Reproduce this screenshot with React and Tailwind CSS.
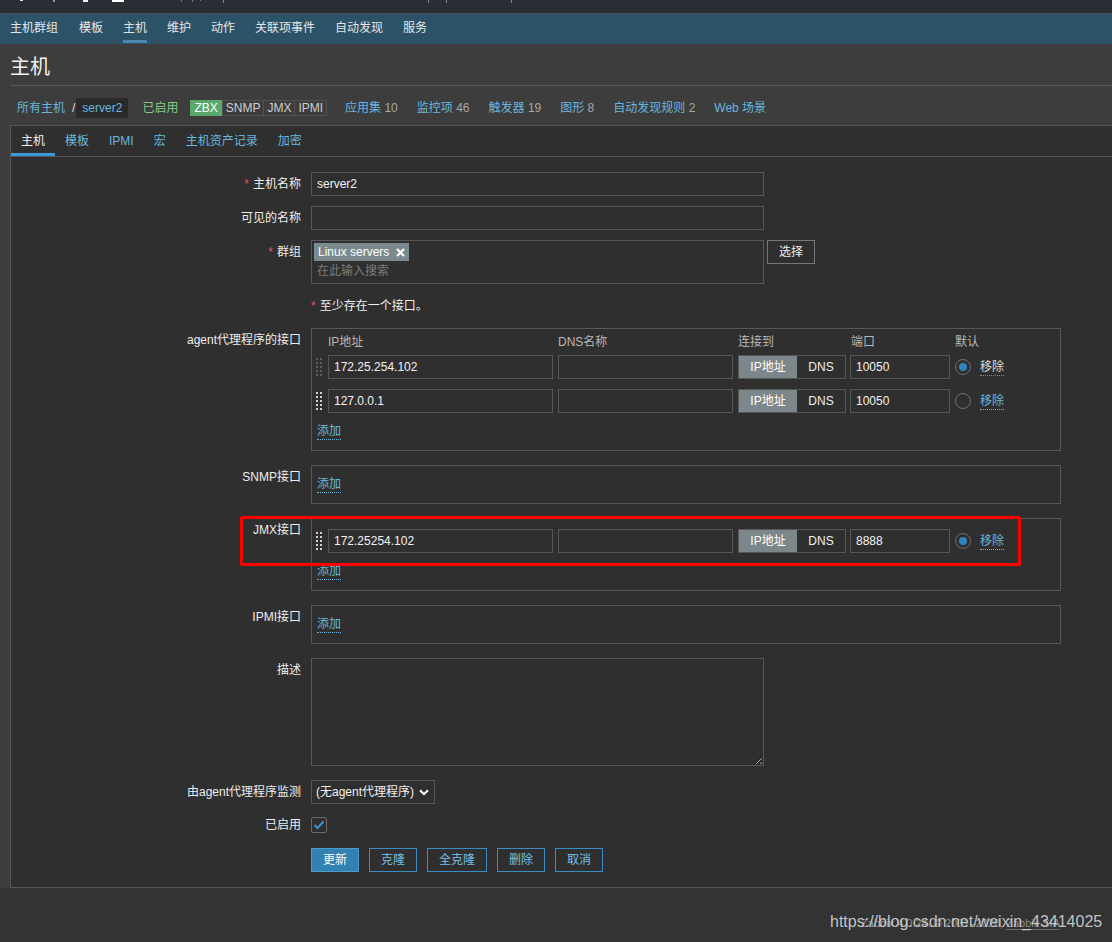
import React from "react";

const link = "text-[#68b7df]";
const field = "h-6 px-[5px] bg-transparent border border-[#575757] outline-none text-[#f2f2f2]";

const navItems = ["主机群组", "模板", "主机", "维护", "动作", "关联项事件", "自动发现", "服务"];
const tabs = ["主机", "模板", "IPMI", "宏", "主机资产记录", "加密"];
const counts = [
  ["应用集", "10"],
  ["监控项", "46"],
  ["触发器", "19"],
  ["图形", "8"],
  ["自动发现规则", "2"],
];

function Label({ children, required }) {
  return (
    <div className="text-right leading-6 text-[#eeeeee] whitespace-nowrap">
      {required && <span className="text-[#e45959] mr-[4px]">*</span>}
      {children}
    </div>
  );
}

function Row({ label, required, className = "", children }) {
  return (
    <div className={`grid grid-cols-[290px_1fr] gap-x-[10px] ${className}`}>
      <Label required={required}>{label}</Label>
      <div>{children}</div>
    </div>
  );
}

function DotLink({ children, dim }) {
  return (
    <span
      className={`inline-block leading-[15px] border-b border-dotted ${
        dim ? "text-[#dcdcdc] border-[#8a8a8a]" : "text-[#68b7df] border-[#68b7df]"
      }`}
    >
      {children}
    </span>
  );
}

function Handle({ dim }) {
  const c = dim ? "#5e5e5e" : "#d0d0d0";
  const dots = [];
  for (let r = 0; r < 5; r++) {
    for (let k = 0; k < 2; k++) {
      dots.push(<rect key={`${r}-${k}`} x={k * 4} y={r * 4} width="2" height="2" fill={c} />);
    }
  }
  return (
    <svg width="6" height="18" viewBox="0 0 6 18">
      {dots}
    </svg>
  );
}

function Radio({ checked }) {
  return (
    <div className="w-4 h-4 rounded-full border-[1.5px] border-[#707070] flex items-center justify-center">
      {checked && <div className="w-2 h-2 rounded-full bg-[#2f82bb]" />}
    </div>
  );
}

function IfaceRow({ ip, port, checked, dim }) {
  return (
    <div className="flex items-center h-6">
      <div className="w-[16px] pl-[4px] flex items-center">
        <Handle dim={dim} />
      </div>
      <input className={`${field} w-[225px]`} value={ip} readOnly />
      <input className={`${field} w-[175px] ml-[5px]`} value="" readOnly />
      <div className="flex h-6 w-[108px] ml-[5px] border border-[#575757]">
        <div className="w-[58px] bg-[#7b878b] text-white flex items-center justify-center">IP地址</div>
        <div className="flex-1 flex items-center justify-center text-[#eeeeee]">DNS</div>
      </div>
      <input className={`${field} w-[100px] ml-[4px]`} value={port} readOnly />
      <div className="ml-[5px]">
        <Radio checked={checked} />
      </div>
      <div className="ml-[9px]">
        <DotLink dim={dim}>移除</DotLink>
      </div>
    </div>
  );
}

function AddLine({ className = "" }) {
  return (
    <div className={`h-6 flex items-center pl-[5px] ${className}`}>
      <DotLink>添加</DotLink>
    </div>
  );
}

function TopFragments() {
  return (
    <svg width="1112" height="13" viewBox="0 0 1112 13">
      <rect x="20" y="0" width="3" height="1" fill="#e8e8e8" />
      <rect x="53" y="0" width="2" height="2" fill="#9a9a9a" />
      <rect x="83" y="0" width="5" height="2" fill="#f0f0f0" />
      <rect x="112" y="0" width="12" height="2" fill="#ffffff" />
      <rect x="181" y="0" width="1" height="2" fill="#777" />
      <rect x="192" y="0" width="1" height="2" fill="#777" />
      <rect x="200" y="0" width="1" height="1" fill="#777" />
      <rect x="223" y="0" width="1" height="3" fill="#888" />
      <rect x="428" y="0" width="1" height="3" fill="#888" />
      <rect x="446" y="0" width="1" height="3" fill="#888" />
      <rect x="511" y="0" width="1" height="3" fill="#888" />
    </svg>
  );
}

export default function App() {
  return (
    <div className="min-h-[942px] bg-[#333333] text-[12px] text-[#eeeeee] font-['Liberation_Sans','Noto_Sans_CJK_SC',sans-serif] overflow-hidden">
      {/* top strip */}
      <div className="h-[14px] bg-[#292d34] border-b border-[#4a4f55]">
        <TopFragments />
      </div>

      {/* main menu */}
      <div className="h-[30px] bg-[#2c5268] flex pl-[10px] gap-[20px]">
        {navItems.map((n, i) => (
          <div key={n} className={`flex flex-col ${i === 1 ? "ml-[1px]" : ""}`}>
            <span className="pt-[3px] leading-[23px] text-[#e6e6e6]">{n}</span>
            {n === "主机" && <div className="h-[3px] bg-[#4a86ae]" />}
          </div>
        ))}
      </div>

      <div className="bg-[#3c3d3c]">
        {/* title */}
        <div className="ml-[10px] h-[42px] pt-[11px] border-b border-[#575757]">
          <h1 className="text-[20px] leading-[24px] text-[#f2f2f2]">主机</h1>
        </div>

        {/* breadcrumbs */}
        <div className="flex items-center h-[20px] mt-[12px] mb-[7px] pl-[17px] whitespace-nowrap">
          <span className={link}>所有主机</span>
          <span className="ml-[7px] text-[#dddddd]">/</span>
          <span className="ml-[1px] h-[20px] px-[6px] leading-[20px] bg-[#2a2a2a] text-[#68b7df]">server2</span>
          <span className="ml-[14px] text-[#86cc89]">已启用</span>
          <div className="ml-[12px] flex h-[16px] leading-[14px]">
            <span className="px-[3px] border border-[#59a96c] bg-[#59a96c] text-white">ZBX</span>
            <span className="px-[3px] border border-[#525252] text-[#cfcfcf]">SNMP</span>
            <span className="px-[3px] border border-l-0 border-[#525252] text-[#cfcfcf]">JMX</span>
            <span className="px-[3px] border border-l-0 border-[#525252] text-[#cfcfcf]">IPMI</span>
          </div>
          <div className="ml-[18px] flex gap-[19px]">
            {counts.map(([t, c]) => (
              <span key={t}>
                <span className={link}>{t}</span> <span className="text-[#a8a8a8]">{c}</span>
              </span>
            ))}
            <span className={link}>Web 场景</span>
          </div>
        </div>

        {/* panel */}
        <div className="ml-[10px] border-t border-l border-b border-[#575757] bg-[#2f2f2f]">
          <div className="flex h-[31px] border-b border-[#575757]">
            {tabs.map((t, i) => (
              <div
                key={t}
                className={`h-[30px] px-[10px] leading-[30px] ${
                  i === 0 ? "text-[#f2f2f2] shadow-[inset_0_-3px_0_#3a9ad9]" : link
                }`}
              >
                {t}
              </div>
            ))}
          </div>

          <div className="pt-[15px] pb-[15px]">
            <Row label="主机名称" required>
              <input className={`${field} w-[453px]`} value="server2" readOnly />
            </Row>

            <Row label="可见的名称" className="mt-[10px]">
              <input className={`${field} w-[453px]`} value="" readOnly />
            </Row>

            <Row label="群组" required className="mt-[10px]">
              <div className="flex items-start gap-[3px]">
                <div className="w-[453px] h-[44px] border border-[#575757] p-[2px]">
                  <span className="inline-flex items-center h-[18px] pl-[4px] pr-[4px] bg-[#7b8a8e] text-white">
                    Linux servers
                    <svg className="ml-[7px]" width="9" height="9" viewBox="0 0 9 9">
                      <path d="M1 1 L8 8 M8 1 L1 8" stroke="#ffffff" strokeWidth="2.2" />
                    </svg>
                  </span>
                  <div className="pl-[3px] leading-[20px] text-[#7c7c7c]">在此输入搜索</div>
                </div>
                <button className="h-6 w-[48px] border border-[#777777] text-[#eeeeee]">选择</button>
              </div>
            </Row>

            <Row label="" className="mt-[10px]">
              <div className="leading-6">
                <span className="text-[#e45959] mr-[4px]">*</span>至少存在一个接口。
              </div>
            </Row>

            <Row label="agent代理程序的接口" className="mt-[10px]">
              <div className="w-[750px] border border-[#575757] pt-[4px] pb-[6px]">
                <div className="flex h-[18px] leading-[18px] text-[#b8b8b8]">
                  <span className="w-[246px] pl-[16px]">IP地址</span>
                  <span className="w-[180px]">DNS名称</span>
                  <span className="w-[113px]">连接到</span>
                  <span className="w-[104px]">端口</span>
                  <span>默认</span>
                </div>
                <div className="mt-[4px]">
                  <IfaceRow ip="172.25.254.102" port="10050" checked dim />
                </div>
                <div className="mt-[10px]">
                  <IfaceRow ip="127.0.0.1" port="10050" />
                </div>
                <AddLine className="mt-[7px]" />
              </div>
            </Row>

            <Row label="SNMP接口" className="mt-[14px]">
              <div className="w-[750px] border border-[#575757] pt-[7px] pb-[6px]">
                <AddLine />
              </div>
            </Row>

            <div className="relative mt-[14px]">
              <Row label="JMX接口">
                <div className="w-[750px] border border-[#575757] pt-[10px] pb-[6px]">
                  <IfaceRow ip="172.25254.102" port="8888" checked />
                  <AddLine className="mt-[7px]" />
                </div>
              </Row>
              <div className="absolute left-[229px] top-[-2px] w-[781px] h-[50px] border-[3px] border-[#ff0000] rounded-[2px]" />
            </div>

            <Row label="IPMI接口" className="mt-[14px]">
              <div className="w-[750px] border border-[#575757] pt-[7px] pb-[6px]">
                <AddLine />
              </div>
            </Row>

            <Row label="描述" className="mt-[14px]">
              <textarea className="block w-[453px] h-[108px] bg-transparent border border-[#575757] outline-none" readOnly />
            </Row>

            <Row label="由agent代理程序监测" className="mt-[14px]">
              <div className="w-[124px] h-6 border border-[#575757] flex items-center justify-between pl-[4px] pr-[5px] text-[#f2f2f2]">
                <span>(无agent代理程序)</span>
                <svg width="10" height="7" viewBox="0 0 10 7">
                  <path d="M1 1.2 L5 5.2 L9 1.2" fill="none" stroke="#ffffff" strokeWidth="2" />
                </svg>
              </div>
            </Row>

            <Row label="已启用" className="mt-[9px]">
              <div className="h-6 flex items-center">
                <div className="w-4 h-4 border border-[#6a6a6a] rounded-[2px] flex items-center justify-center">
                  <svg width="12" height="10" viewBox="0 0 12 10">
                    <path d="M1.5 5 L4.5 8 L10.5 1.5" fill="none" stroke="#3d93d3" strokeWidth="2" />
                  </svg>
                </div>
              </div>
            </Row>

            <Row label="" className="mt-[11px]">
              <div className="flex gap-[10px]">
                <button className="h-6 px-[11px] bg-[#3181b1] border border-[#4a9ccd] text-white">更新</button>
                <button className="h-6 px-[11px] border border-[#3b8cc2] text-[#74c0ea]">克隆</button>
                <button className="h-6 px-[11px] border border-[#3b8cc2] text-[#74c0ea]">全克隆</button>
                <button className="h-6 px-[11px] border border-[#3b8cc2] text-[#74c0ea]">删除</button>
                <button className="h-6 px-[11px] border border-[#3b8cc2] text-[#74c0ea]">取消</button>
              </div>
            </Row>
          </div>
        </div>
      </div>

      {/* footer */}
      <div className="relative h-[60px] pt-[28px] flex justify-end pr-[52px]">
        <span className="text-[11px] leading-[14px] text-[#8c8c8c] whitespace-nowrap">
          Zabbix 4.0.24. © 2001–2020, <span className="border-b border-[#6a6a6a]">Zabbix SIA</span>
        </span>
        <div className="absolute left-[830px] top-[25px] text-[16px] leading-[18px] text-[#d6d6d6]/90 whitespace-nowrap">
          https://blog.csdn.net/weixin_43414025
        </div>
      </div>
    </div>
  );
}
